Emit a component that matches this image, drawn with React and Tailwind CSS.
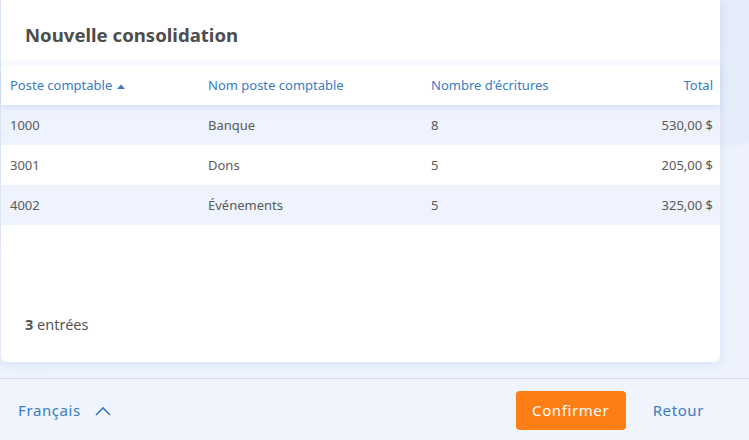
import React from "react";

const rows = [
  { code: "1000", name: "Banque", count: 8, total: "530,00 $" },
  { code: "3001", name: "Dons", count: 5, total: "205,00 $" },
  { code: "4002", name: "Événements", count: 5, total: "325,00 $" },
];

const cardFont = { fontFamily: "'Noto Sans', Lato, sans-serif" };
const footFont = { fontFamily: "'Noto Sans', 'DejaVu Sans', sans-serif" };

export default function App() {
  return (
    <div className="flex h-[440px] w-[749px] flex-col overflow-hidden bg-[linear-gradient(172deg,#e3eaf9_0%,#e6edfa_45%,#edf2fc_46%,#eef3fc_100%)]">
      <div className="flex-1 pb-4 pl-[1px] pr-[29px]">
        <div className="flex h-full flex-col rounded-b-md bg-white shadow-[0_2px_10px_rgba(80,120,210,0.15)]" style={cardFont}>
          <h1 className="h-[60px] px-6 pt-[22px] text-[18.6px] font-bold leading-[26px] text-[#4d4d4d]">Nouvelle consolidation</h1>
          <div className="h-[6px] bg-[#f8faff]" />
          <table className="w-full table-fixed border-collapse text-[13px]">
            <thead>
              <tr className="relative h-[39px] bg-white text-[#3a7bc4] shadow-[0_3px_6px_rgba(90,130,220,0.14)]">
                <th className="w-[207px] pl-[9px] text-left font-normal">
                  Poste comptable
                  <svg className="ml-[5px] inline-block align-middle" width="8" height="5" viewBox="0 0 8 5">
                    <path d="M0 5 L4 0.5 L8 5 Z" fill="#3a7bc4" />
                  </svg>
                </th>
                <th className="w-[223px] text-left font-normal">Nom poste comptable</th>
                <th className="text-left font-normal">Nombre d'écritures</th>
                <th className="w-[150px] pr-[7px] text-right font-normal">Total</th>
              </tr>
            </thead>
            <tbody className="text-[#5a5a5a]">
              {rows.map((row, i) => (
                <tr key={row.code} className={`h-10 ${i % 2 === 0 ? "bg-[#eef3fd]" : "bg-white"}`}>
                  <td className="pl-[9px] pt-[1px]">{row.code}</td>
                  <td className="pt-[1px]">{row.name}</td>
                  <td className="pt-[1px]">{row.count}</td>
                  <td className="pr-[7px] pt-[1px] text-right">{row.total}</td>
                </tr>
              ))}
            </tbody>
          </table>
          <div className="flex-1" />
          <p className="px-6 pb-[26px] text-[14.5px] text-[#555]">
            <span className="font-bold">3</span> entrées
          </p>
        </div>
      </div>
      <div className="flex h-[62px] items-center border-t border-[#d6dce8] bg-[#eff4fd] pl-[18px] pr-[45px] pt-[2px]" style={footFont}>
        <button className="flex items-center gap-[14px] text-[15px] tracking-[0.6px] text-[#3a7bc4]">
          Français
          <svg width="16" height="10" viewBox="0 0 16 10" fill="none">
            <path d="M1 9 L8 2 L15 9" stroke="#3a7bc4" strokeWidth="1.6" />
          </svg>
        </button>
        <div className="flex-1" />
        <button className="h-[39px] w-[110px] rounded bg-[#fd7e14] text-[15px] tracking-[0.6px] text-white">Confirmer</button>
        <button className="ml-[27px] text-[15px] tracking-[0.6px] text-[#3a7bc4]">Retour</button>
      </div>
    </div>
  );
}
